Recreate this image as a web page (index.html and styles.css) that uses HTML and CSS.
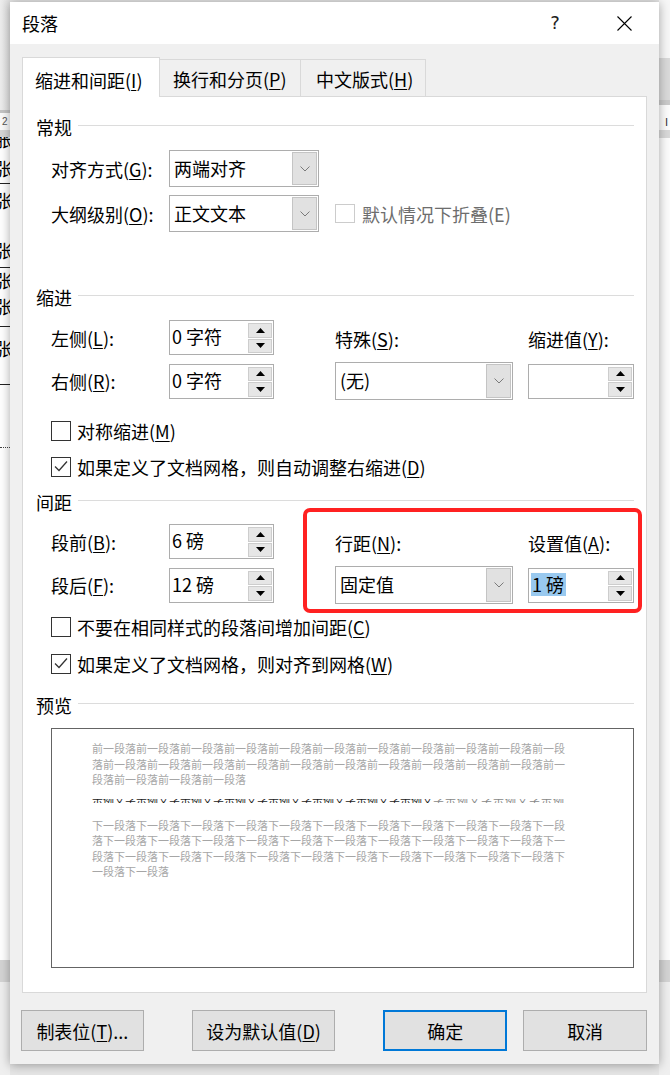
FILE: index.html
```html
<!DOCTYPE html>
<html lang="zh-CN">
<head>
<meta charset="utf-8">
<title>段落</title>
<link rel="stylesheet" href="styles.css">
</head>
<body>
<div class="desk">
  <div class="side side-left">
    <div class="lb-ribbon"></div>
    <div class="lb-line"></div>
    <div class="lb-ruler">2</div>
    <div class="lb-band"></div>
    <div class="lb-doc">
      <div class="g g-cut">胀</div>
      <div class="sp6"></div>
      <div class="g">张</div>
      <div class="hl"></div>
      <div class="g">张</div>
      <div class="sp25"></div>
      <div class="g">张</div>
      <div class="hl hl-thin"></div>
      <div class="g">张</div>
      <div class="g g-tight">张</div>
      <div class="hl hl-mid"></div>
      <div class="g">张</div>
      <div class="hl hl-low"></div>
      <div class="dots"></div>
    </div>
    <div class="lb-status"></div>
    <div class="lb-foot"></div>
  </div>
  <div class="desk-mid"></div>
  <div class="side side-right">
    <div class="rb-top"></div>
    <div class="rb-ribbon"></div>
    <div class="rb-line"></div>
    <div class="rb-ruler"><span class="rb-mark">I</span></div>
    <div class="rb-band"></div>
    <div class="rb-doc"></div>
    <div class="rb-status"></div>
    <div class="rb-foot"></div>
  </div>
</div>

<div class="dialog">
  <div class="titlebar">
    <span class="title">段落</span>
    <span class="help">?</span>
    <svg class="close" viewBox="0 0 15 15" width="15" height="15"><path d="M0.5 0.5 L14.5 14.5 M14.5 0.5 L0.5 14.5" stroke="#000" stroke-width="1.1" fill="none"/></svg>
  </div>
  <div class="dlg-body">
    <div class="tabs">
      <div class="tab tab-active">缩进和间距(<u>I</u>)</div>
      <div class="tab tab-2">换行和分页(<u>P</u>)</div>
      <div class="tab tab-3">中文版式(<u>H</u>)</div>
    </div>
    <div class="panel">
      <div class="group-head"><span>常规</span><i class="rule"></i></div>
      <div class="row row-first">
        <span class="lbl">对齐方式(<u>G</u>):</span>
        <div class="combo combo-150"><span class="combo-text">两端对齐</span><span class="combo-btn"><svg width="10" height="6" viewBox="0 0 10 6"><polyline points="0.5,0.5 5,5 9.5,0.5" fill="none" stroke="#7a7a7a" stroke-width="1"/></svg></span></div>
      </div>
      <div class="row row-second">
        <span class="lbl">大纲级别(<u>O</u>):</span>
        <div class="combo combo-150"><span class="combo-text">正文文本</span><span class="combo-btn"><svg width="10" height="6" viewBox="0 0 10 6"><polyline points="0.5,0.5 5,5 9.5,0.5" fill="none" stroke="#7a7a7a" stroke-width="1"/></svg></span></div>
        <span class="box box-disabled"></span><span class="disabled-text">默认情况下折叠(E)</span>
      </div>

      <div class="group-head gh-indent"><span>缩进</span><i class="rule"></i></div>
      <div class="grid grid-indent">
        <span class="lbl c1 r1">左侧(<u>L</u>):</span>
        <div class="spin c2 r1"><span class="spin-text">0 字符</span><span class="spin-btns"><span><svg width="9" height="5" viewBox="0 0 9 5"><polygon points="0,5 4.5,0 9,5" fill="#000"/></svg></span><span><svg width="9" height="5" viewBox="0 0 9 5"><polygon points="0,0 9,0 4.5,5" fill="#000"/></svg></span></span></div>
        <span class="lbl c4 r1 lbl-right">特殊(<u>S</u>):</span>
        <span class="lbl c6 r1 lbl-right">缩进值(<u>Y</u>):</span>
        <span class="lbl c1 r2">右侧(<u>R</u>):</span>
        <div class="spin c2 r2"><span class="spin-text">0 字符</span><span class="spin-btns"><span><svg width="9" height="5" viewBox="0 0 9 5"><polygon points="0,5 4.5,0 9,5" fill="#000"/></svg></span><span><svg width="9" height="5" viewBox="0 0 9 5"><polygon points="0,0 9,0 4.5,5" fill="#000"/></svg></span></span></div>
        <div class="combo combo-178 c4 r2"><span class="combo-text">(无)</span><span class="combo-btn"><svg width="10" height="6" viewBox="0 0 10 6"><polyline points="0.5,0.5 5,5 9.5,0.5" fill="none" stroke="#7a7a7a" stroke-width="1"/></svg></span></div>
        <div class="spin spin-106 c6 r2"><span class="spin-text"></span><span class="spin-btns"><span><svg width="9" height="5" viewBox="0 0 9 5"><polygon points="0,5 4.5,0 9,5" fill="#000"/></svg></span><span><svg width="9" height="5" viewBox="0 0 9 5"><polygon points="0,0 9,0 4.5,5" fill="#000"/></svg></span></span></div>
      </div>
      <div class="check ck-1"><span class="box"></span><span>对称缩进(<u>M</u>)</span></div>
      <div class="check ck-2"><span class="box"><svg width="18" height="18" viewBox="0 0 18 18"><polyline points="3,8.5 7,12.5 15,3.5" fill="none" stroke="#333" stroke-width="1.3"/></svg></span><span>如果定义了文档网格，则自动调整右缩进(<u>D</u>)</span></div>

      <div class="group-head gh-spacing"><span>间距</span><i class="rule"></i></div>
      <div class="grid grid-spacing">
        <span class="lbl c1 r1">段前(<u>B</u>):</span>
        <div class="spin c2 r1"><span class="spin-text">6 磅</span><span class="spin-btns"><span><svg width="9" height="5" viewBox="0 0 9 5"><polygon points="0,5 4.5,0 9,5" fill="#000"/></svg></span><span><svg width="9" height="5" viewBox="0 0 9 5"><polygon points="0,0 9,0 4.5,5" fill="#000"/></svg></span></span></div>
        <span class="lbl c4 r1 lbl-right">行距(<u>N</u>):</span>
        <span class="lbl c6 r1 lbl-right">设置值(<u>A</u>):</span>
        <span class="lbl c1 r2">段后(<u>F</u>):</span>
        <div class="spin c2 r2"><span class="spin-text">12 磅</span><span class="spin-btns"><span><svg width="9" height="5" viewBox="0 0 9 5"><polygon points="0,5 4.5,0 9,5" fill="#000"/></svg></span><span><svg width="9" height="5" viewBox="0 0 9 5"><polygon points="0,0 9,0 4.5,5" fill="#000"/></svg></span></span></div>
        <div class="combo combo-178 c4 r2"><span class="combo-text">固定值</span><span class="combo-btn"><svg width="10" height="6" viewBox="0 0 10 6"><polyline points="0.5,0.5 5,5 9.5,0.5" fill="none" stroke="#7a7a7a" stroke-width="1"/></svg></span></div>
        <div class="spin spin-106 c6 r2"><span class="spin-text"><span class="sel">1 磅</span></span><span class="spin-btns"><span><svg width="9" height="5" viewBox="0 0 9 5"><polygon points="0,5 4.5,0 9,5" fill="#000"/></svg></span><span><svg width="9" height="5" viewBox="0 0 9 5"><polygon points="0,0 9,0 4.5,5" fill="#000"/></svg></span></span></div>
        <div class="red-mark"></div>
      </div>
      <div class="check ck-3"><span class="box"></span><span>不要在相同样式的段落间增加间距(<u>C</u>)</span></div>
      <div class="check ck-4"><span class="box"><svg width="18" height="18" viewBox="0 0 18 18"><polyline points="3,8.5 7,12.5 15,3.5" fill="none" stroke="#333" stroke-width="1.3"/></svg></span><span>如果定义了文档网格，则对齐到网格(<u>W</u>)</span></div>

      <div class="group-head gh-preview"><span>预览</span><i class="rule"></i></div>
      <div class="preview">
        <div class="pv-text">前一段落前一段落前一段落前一段落前一段落前一段落前一段落前一段落前一段落前一段落前一段落前一段落前一段落前一段落前一段落前一段落前一段落前一段落前一段落前一段落前一段落前一段落前一段落前一段落前一段落</div>
        <div class="pv-strip"><div class="pv-strip-in"><span class="pv-dark">示例文字示例文字示例文字示例文字示例文字示例文字示例文字示例文</span><span class="pv-light">字示例文字示例文字示例文字示例文字示例</span></div></div>
        <div class="pv-text">下一段落下一段落下一段落下一段落下一段落下一段落下一段落下一段落下一段落下一段落下一段落下一段落下一段落下一段落下一段落下一段落下一段落下一段落下一段落下一段落下一段落下一段落下一段落下一段落下一段落下一段落下一段落下一段落下一段落下一段落下一段落下一段落下一段落下一段落</div>
      </div>
    </div>
    <div class="buttons">
      <div class="btn btn-tabs">制表位(<u>T</u>)...</div>
      <div class="btn btn-default">设为默认值(<u>D</u>)</div>
      <div class="btn btn-ok">确定</div>
      <div class="btn btn-cancel">取消</div>
    </div>
  </div>
</div>
</body>
</html>
```

FILE: styles.css
```css
* { box-sizing: border-box; }
html, body { margin: 0; padding: 0; }
body {
  width: 670px;
  height: 1075px;
  overflow: hidden;
  position: relative;
  background: #f0f0f0;
  font-family: "Noto Sans CJK SC", "Noto Sans", sans-serif;
  font-size: 18px;
  color: #000;
}
u { text-decoration: underline; text-decoration-thickness: 1px; text-underline-offset: 2px; }

/* ---------- background document ---------- */
.desk { display: flex; height: 1075px; }
.side { display: flex; flex-direction: column; overflow: hidden; }
.side-left { width: 10px; }
.side-right { width: 11px; }
.desk-mid { flex: 1; background: #e6e6e6; }

.lb-ribbon { height: 110px; background: linear-gradient(90deg, #eeeeee, #e0e0e0); }
.lb-line { height: 3px; background: #c4c4c4; }
.lb-ruler { height: 17px; background: #fbfbfb; font-family: "Liberation Sans", sans-serif; font-size: 10px; line-height: 17px; color: #555; padding-left: 2px; }
.lb-band { height: 7px; background: #d6d6d6; }
.lb-doc { height: 823px; background: #fff; }
.lb-status { height: 22px; background: #d4d4d4; }
.lb-foot { flex: 1; background: #efefef; }

.g { height: 25px; line-height: 25px; font-size: 18px; margin-left: -5px; white-space: nowrap; overflow: hidden; }
.g-cut { height: 13px; line-height: 5px; }
.g-tight { margin-top: 1px; }
.sp6 { height: 6px; }
.sp25 { height: 25px; }
.hl { height: 1px; background: #222; margin: 2px 0 4px; }
.hl-thin { margin: 4px 0 0; height: 1px; }
.hl-mid { margin: 7px 0 9px; }
.hl-low { margin: 23px 0 0; }
.dots { height: 1px; margin-top: 62px; border-top: 1px dotted #444; }

.rb-top { height: 58px; background: #f7f7f7; }
.rb-ribbon { height: 42px; background: #dadada; }
.rb-line { height: 5px; background: #cbcbcb; }
.rb-ruler { height: 25px; background: #fdfdfd; font-family: "Liberation Sans", sans-serif; font-size: 11px; line-height: 34px; padding-left: 6px; color: #333; }
.rb-band { height: 8px; background: #d9d9d9; }
.rb-doc { height: 822px; background: #fcfcfc; }
.rb-status { height: 22px; background: #d4d4d4; }
.rb-foot { flex: 1; background: #efefef; }

/* ---------- dialog ---------- */
.dialog {
  position: absolute;
  left: 10px;
  top: 2px;
  width: 649px;
  height: 1062px;
  background: #f0f0f0;
  box-shadow: 0 1px 10px rgba(0, 0, 0, 0.35);
}
.titlebar {
  height: 42px;
  background: #fff;
  display: flex;
  align-items: center;
  padding: 0 27px 0 12px;
}
.title { flex: 1; line-height: 42px; }
.help {
  width: 20px;
  text-align: center;
  font-family: "DejaVu Sans", sans-serif;
  font-size: 18px;
  line-height: 42px;
  color: #222;
}
.close { margin-left: 52px; display: block; }

.dlg-body { padding: 13px 12px 0 12px; }

.tabs {
  display: flex;
  align-items: flex-end;
  position: relative;
  z-index: 1;
  margin-bottom: -1px;
}
.tab {
  line-height: 24px;
  white-space: nowrap;
}
.tab-active {
  width: 138px;
  height: 40px;
  background: #fff;
  border: 1px solid #d9d9d9;
  border-bottom: none;
  padding: 10px 0 0 12px;
}
.tab-2, .tab-3 {
  height: 37px;
  margin-bottom: 1px;
  background: #f0f0f0;
  border-top: 1px solid #d9d9d9;
  border-right: 1px solid #d9d9d9;
  padding: 7px 0 0 13px;
}
.tab-2 { width: 141px; }
.tab-3 { width: 125px; padding-left: 15px; }

.panel {
  width: 625px;
  background: #fff;
  border: 1px solid #d9d9d9;
  padding: 18px 12px 24px 13px;
}

.group-head { display: flex; align-items: center; height: 24px; line-height: 24px; }
.group-head .rule { flex: 1; height: 1px; background: #dcdcdc; margin-left: 6px; margin-top: -3px; }
.gh-indent { margin-top: 53px; }
.gh-spacing { margin-top: 11px; }
.gh-preview { margin-top: 17px; }

.row { display: flex; align-items: center; margin-left: 15px; }
.row-first { margin-top: 11px; }
.row-second { margin-top: 8px; }
.lbl { width: 118px; line-height: 24px; white-space: nowrap; }
.lbl-right { width: auto; margin-top: 3px; }

.combo {
  display: flex;
  height: 37px;
  border: 1px solid #adadad;
  background: #fff;
}
.combo-150 { width: 150px; }
.combo-178 { width: 178px; height: 38px; }
.combo-text { flex: 1; padding-left: 4px; line-height: 35px; white-space: nowrap; }
.combo-btn {
  width: 25px;
  margin: 1px 1px 1px 0;
  background: #e1e1e1;
  border: 1px solid #c4c4c4;
  display: flex;
  align-items: center;
  justify-content: center;
}

.box {
  width: 20px;
  height: 20px;
  border: 1px solid #333;
  background: #fff;
  margin-right: 6px;
  flex: none;
  display: flex;
}
.box svg { display: block; }
.box-disabled { border-color: #cccccc; margin-left: 16px; width: 20px; height: 19px; }
.disabled-text { color: #6d6d6d; line-height: 24px; margin-left: 1px; }

.grid {
  display: grid;
  grid-template-columns: 118px 105px 61px 178px 15px 106px;
  grid-template-rows: 35px 38px;
  row-gap: 7px;
  margin-left: 15px;
  align-items: center;
  position: relative;
}
.grid-indent { margin-top: 11px; }
.grid-spacing { margin-top: 10px; }
.c1 { grid-column: 1; }
.c2 { grid-column: 2; }
.c4 { grid-column: 4; }
.c6 { grid-column: 6; }
.r1 { grid-row: 1; }
.r2 { grid-row: 2; }

.spin {
  display: flex;
  width: 105px;
  height: 35px;
  border: 1px solid #adadad;
  background: #fff;
}
.spin-106 { width: 106px; }
.spin-text { flex: 1; padding-left: 2px; line-height: 30px; white-space: nowrap; }
.spin-btns {
  width: 24px;
  margin: 2px 1px 1px 0;
  display: flex;
  flex-direction: column;
  gap: 1px;
}
.spin-btns > span {
  flex: 1;
  background: #e6e6e6;
  border: 1px solid #cdcdcd;
  display: flex;
  align-items: center;
  justify-content: center;
}
.sel { background: #99c9ef; padding: 0 2px 0 1px; display: inline-block; line-height: 23px; margin-top: 3px; }

.red-mark {
  position: absolute;
  left: 252px;
  top: -16px;
  width: 339px;
  height: 105px;
  border: 4px solid #ff2121;
  border-radius: 7px;
  pointer-events: none;
}

.check { display: flex; align-items: center; margin-left: 15px; height: 24px; line-height: 24px; white-space: nowrap; }
.ck-1 { margin-top: 19px; }
.ck-2 { margin-top: 12px; }
.ck-3 { margin-top: 11px; }
.ck-4 { margin-top: 13px; }

.preview {
  margin: 11px 0 0 15px;
  width: 583px;
  height: 240px;
  border: 1px solid #646464;
  background: #fff;
  padding: 12px 0 0 40px;
}
.pv-text {
  width: 474px;
  font-size: 11px;
  line-height: 15.5px;
  color: #a6a6a6;
}
.pv-strip { height: 4px; overflow: hidden; margin: 11px 0 15px; width: 474px; }
.pv-strip-in { font-size: 11px; line-height: 11px; margin-top: -4px; white-space: nowrap; }
.pv-dark { color: #222; }
.pv-light { color: #888; letter-spacing: 1px; }

.buttons { display: flex; margin: 17px 0 0 -1px; }
.btn {
  height: 41px;
  background: #e1e1e1;
  border: 1px solid #adadad;
  display: flex;
  align-items: center;
  justify-content: center;
  white-space: nowrap;
  line-height: 24px;
}
.btn-tabs { width: 123px; }
.btn-default { width: 144px; margin-left: 48px; }
.btn-ok { width: 124px; margin-left: 48px; border: 2px solid #0078d7; }
.btn-cancel { width: 124px; margin-left: 16px; }
```
